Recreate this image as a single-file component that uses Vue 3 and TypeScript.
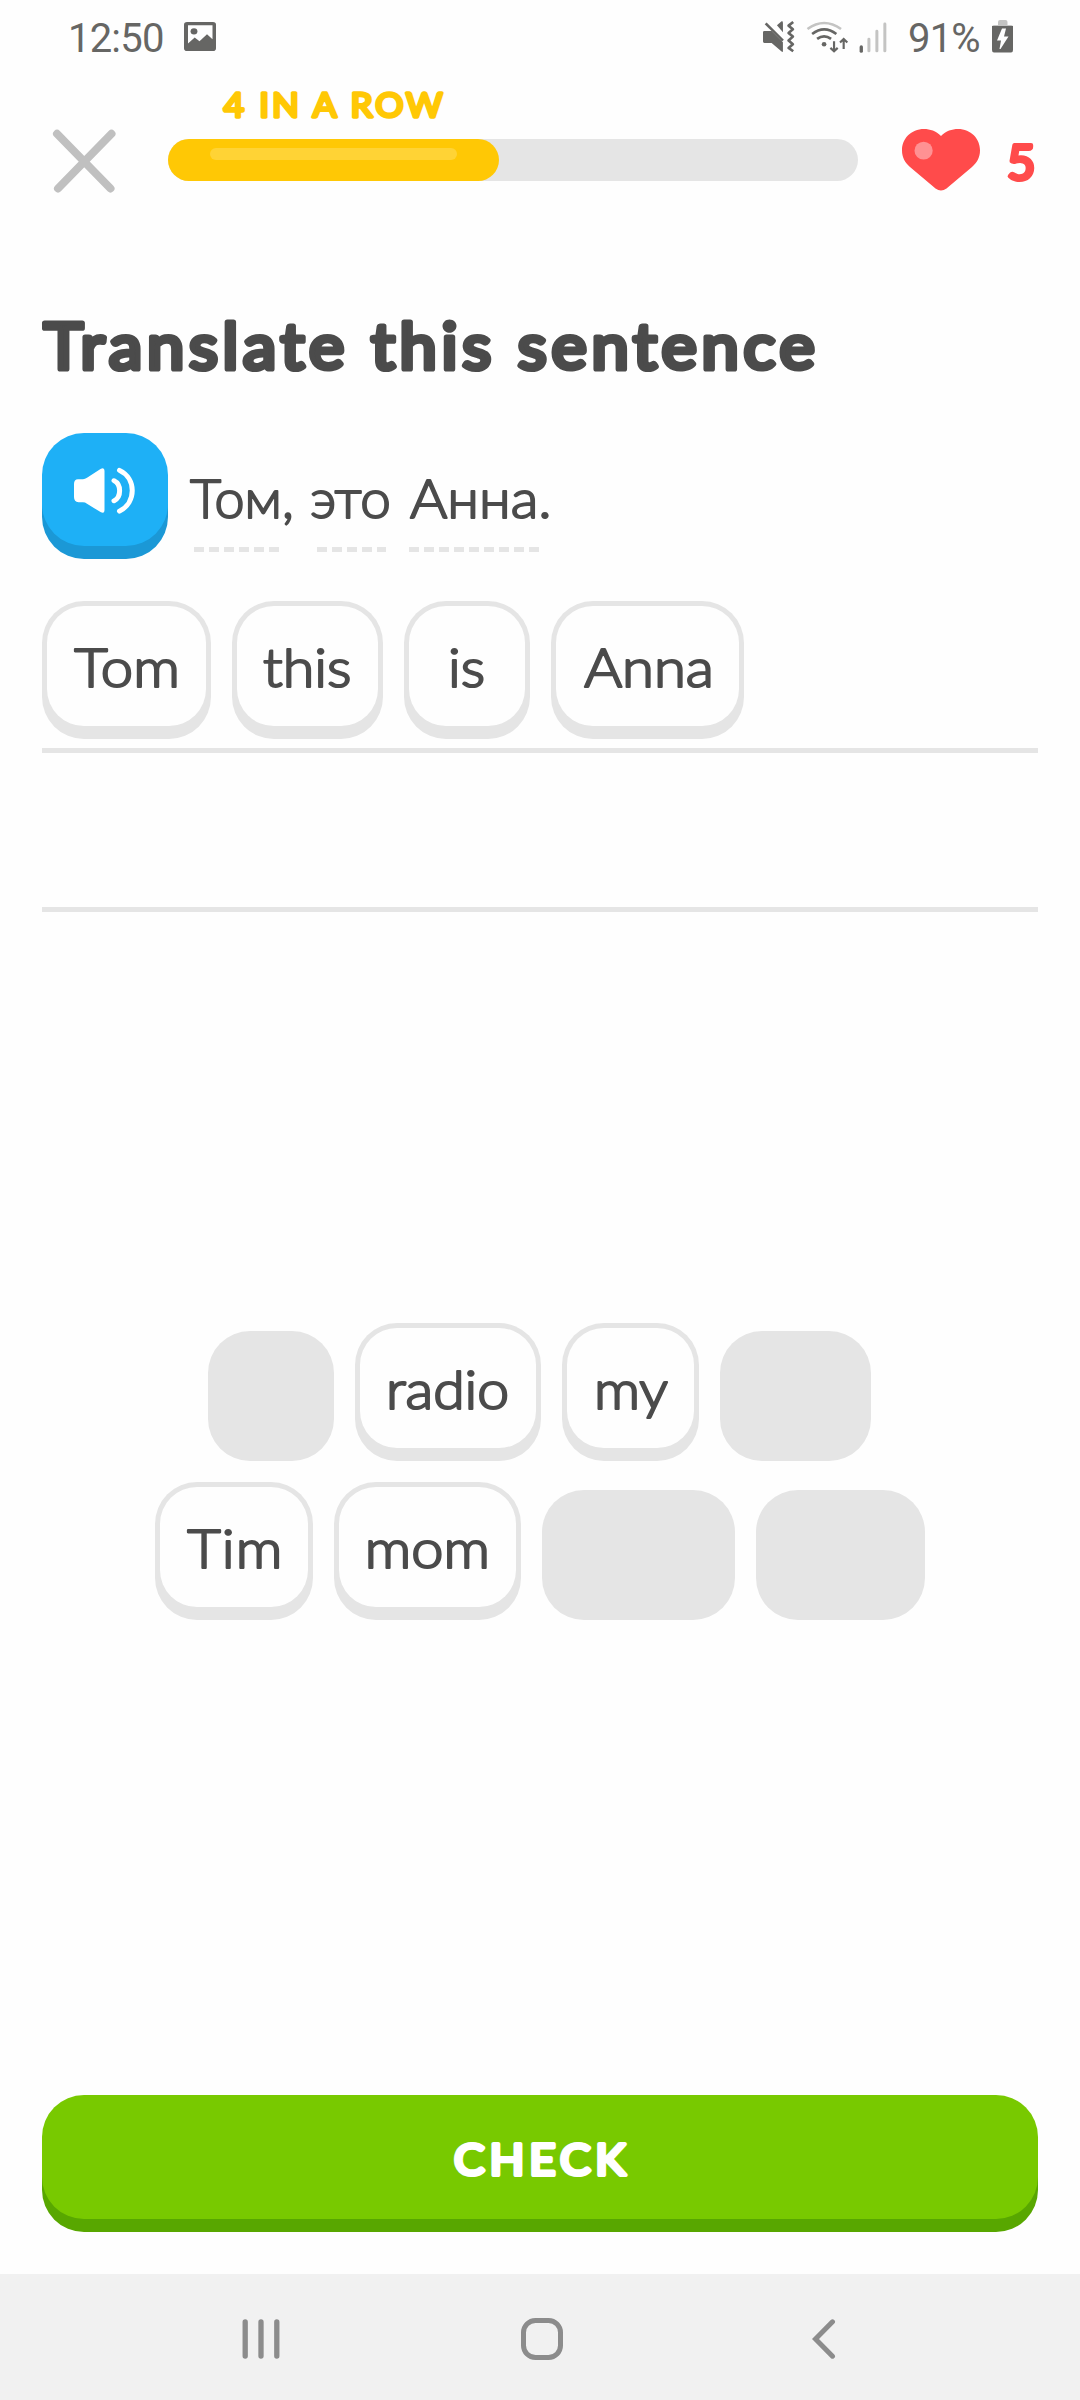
<script setup lang="ts">
import { h, type FunctionalComponent } from 'vue'

interface LabelProps {
  text: string
  ink: number
  cap: number
  stroke: number
  weight?: number
  widen?: number
}

interface Word {
  text: string
  width: number
  inset?: number
  ink?: number
  used?: boolean
}

const context = document.createElement('canvas').getContext('2d')!
const CAP_RATIO = 0.72

// A text line with rounded stroke ends, widened and tracked so that its glyphs fill `ink` pixels.
const RoundLabel: FunctionalComponent<LabelProps> = (props) => {
  const size = (props.cap - props.stroke) / CAP_RATIO
  const weight = props.weight ?? 400
  context.font = `${weight} ${size}px Lato, "Open Sans", sans-serif`
  const m = context.measureText(props.text)
  const glyphs = m.actualBoundingBoxLeft + m.actualBoundingBoxRight
  const gaps = props.text.length - 1
  const stretch = gaps > 0 ? Math.min(props.widen ?? 1.09, Math.max(0.96, props.ink / (glyphs + props.stroke))) : 1
  const spacing = gaps > 0 ? (props.ink / stretch - props.stroke - glyphs) / gaps : 0
  return h('svg', { width: props.ink, height: props.cap, style: { overflow: 'visible', display: 'block', flex: 'none' } }, [
    h('text', {
      x: m.actualBoundingBoxLeft + props.stroke / 2,
      y: props.cap - props.stroke / 2,
      transform: `scale(${stretch} 1)`,
      fill: 'currentColor',
      stroke: 'currentColor',
      'stroke-width': props.stroke,
      'stroke-linejoin': 'round',
      style: {
        fontFamily: 'Lato, "Open Sans", sans-serif',
        fontSize: `${size}px`,
        fontWeight: weight,
        letterSpacing: `${spacing}px`,
        whiteSpace: 'pre',
      },
    }, props.text),
  ])
}
RoundLabel.props = ['text', 'ink', 'cap', 'stroke', 'weight', 'widen']

const prompt = [
  { text: 'Том,', ink: 103, dash: 85, lead: 5 },
  { text: 'это', ink: 79, dash: 69, lead: 6 },
  { text: 'Анна.', ink: 140, dash: 130, lead: 0 },
]

const answer: Word[] = [
  { text: 'Tom', width: 169, inset: 30.5, ink: 104 },
  { text: 'this', width: 151, inset: 31, ink: 88 },
  { text: 'is', width: 126, inset: 46, ink: 34.5 },
  { text: 'Anna', width: 193, inset: 31.5, ink: 128 },
]

const bank: Word[][] = [
  [
    { text: 'is', width: 126, used: true },
    { text: 'radio', width: 186, inset: 34, ink: 118.5 },
    { text: 'my', width: 137, inset: 34.5, ink: 71.5 },
    { text: 'this', width: 151, used: true },
  ],
  [
    { text: 'Tim', width: 158, inset: 30.5, ink: 93.5 },
    { text: 'mom', width: 187, inset: 34, ink: 119 },
    { text: 'Anna', width: 193, used: true },
    { text: 'Tom', width: 169, used: true },
  ],
]

const progress = 48
</script>

<template>
  <main class="screen">
    <div class="status">
      <span class="status-text">12:50</span>
      <svg class="picture" width="32" height="29" viewBox="0 0 32 31" preserveAspectRatio="none">
        <path fill="#666664" fill-rule="evenodd" d="M3 0H29Q32 0 32 3V28Q32 31 29 31H3Q0 31 0 28V3Q0 0 3 0ZM4 3.5V23L10.700 16.500L15.500 20.500L23 13L28.500 18.500V3.500Z" />
        <circle cx="10" cy="10" r="3.400" fill="#666664" />
      </svg>
      <svg class="signals" width="124" height="34" viewBox="66 59 373.500 102.400" fill="none">
        <g fill="#666664">
          <path d="M70 92H92L126 126V153Q126 157 122 154L92 128H70Q66 128 66 124V96Q66 92 70 92Z" />
          <path d="M108 75L122 63Q126 62 126 67V96Z" />
        </g>
        <path d="M74 69L126 121" stroke="#666664" stroke-width="8" />
        <path d="M157 65L143 76L156 87L143 98L156 109L143 121L156 132L143 143L157 153" stroke="#666664" stroke-width="8" stroke-linejoin="round" />
        <path d="M200 86Q250 50 301 86" stroke="#c4c4c3" stroke-width="8" />
        <path d="M214 101Q250 73 287 101M229 116Q250 100 271 116" stroke="#666664" stroke-width="8" />
        <circle cx="250" cy="132" r="7" fill="#666664" />
        <path d="M280 123V152M269 143L280 153L291 143M309 146V117M298 127L309 116L320 127" stroke="#666664" stroke-width="6.500" />
        <path d="M362 140V153" stroke="#666664" stroke-width="10" stroke-linecap="round" />
        <path d="M385 117V152M409 93V152M433 71V152" stroke="#c4c4c3" stroke-width="9" stroke-linecap="round" />
      </svg>
      <span class="status-text battery-text">91%</span>
      <svg class="battery" width="21" height="33" viewBox="0 0 21 33">
        <path d="M6 5V2Q6 0 8 0H13.500Q15.500 0 15.500 2V5H19Q21 5 21 7V9H0V7Q0 5 2 5Z" fill="#c4c4c3" />
        <path d="M0 6H21V30Q21 32.500 19 32.500H2Q0 32.500 0 30Z" fill="#666664" />
        <path d="M10 8.500H14L12 16.500H16.500L8.500 29H7.500L9 20.500H5Z" fill="#fefefe" />
      </svg>
    </div>

    <header class="lesson">
      <svg class="close" width="64" height="64" viewBox="0 0 64 64">
        <path d="M5 4.800L58.500 59.500M59.500 4.800L6 59.500" stroke="#c0c0c0" stroke-width="8" stroke-linecap="round" />
      </svg>
      <div class="progress">
        <div class="streak"><RoundLabel text="4 IN A ROW" :ink="225" :cap="27.5" :stroke="3.3" :widen="1.05" /></div>
        <div class="track">
          <div class="fill" :style="{ width: progress + '%' }"><div class="shine" /></div>
        </div>
      </div>
      <svg class="heart" width="78" height="62" viewBox="0 0 78 63" preserveAspectRatio="none">
        <path d="M39 7C34 2 28 0 22 0C9 0 0 10 0 21.500C0 29 3 34 8 38.500L33.500 60.500Q39 64.500 44.500 60.500L70 38.500C75 34 78 29 78 21.500C78 10 69 0 56 0C50 0 44 2 39 7Z" fill="#ff4b4b" />
        <circle cx="21.600" cy="22" r="9.100" fill="#ff9193" />
      </svg>
      <div class="lives"><RoundLabel text="5" :ink="28" :cap="39.5" :stroke="4.2" /></div>
    </header>

    <h1 class="title"><RoundLabel text="Translate this sentence" :ink="774" :cap="50.5" :stroke="5.2" :widen="1.06" /></h1>

    <section class="prompt">
      <button class="speaker" aria-label="Play">
        <svg width="61" height="47" viewBox="0 0 61 50" preserveAspectRatio="none" fill="none">
          <path d="M4 13H9Q11 13 13 11.500L26.500 2Q30.500 0 30.500 4V46Q30.500 50 26.500 48L13 39Q11 37.500 9 37.500H4.500Q0 37 0 32V18Q0 13 4 13Z" fill="#fff" />
          <path d="M40 14.500C47.500 18.500 47.500 32 40 36M45.500 3.500C62.500 12 62.500 38 45.500 47" stroke="#fff" stroke-width="5" stroke-linecap="round" />
        </svg>
      </button>
      <div class="sentence">
        <div v-for="part in prompt" :key="part.text" class="part">
          <RoundLabel :text="part.text" :ink="part.ink" :cap="40.500" :stroke="2" :weight="300" />
          <div class="dashes" :style="{ width: part.dash + 'px', marginLeft: part.lead + 'px' }" />
        </div>
      </div>
    </section>

    <section class="answer">
      <div class="line first">
        <div v-for="word in answer" :key="word.text" class="tile" :style="{ width: word.width + 'px', paddingLeft: word.inset + 'px' }">
          <RoundLabel :text="word.text" :ink="word.ink!" :cap="40.500" :stroke="2.200" :weight="300" />
        </div>
      </div>
      <div class="line" />
    </section>

    <section class="bank">
      <div v-for="(row, i) in bank" :key="i" class="row">
        <template v-for="word in row" :key="word.text">
          <div v-if="word.used" class="hole" :style="{ width: word.width + 'px' }" />
          <div v-else class="tile" :style="{ width: word.width + 'px', paddingLeft: word.inset + 'px' }">
            <RoundLabel :text="word.text" :ink="word.ink!" :cap="40.500" :stroke="2.200" :weight="300" />
          </div>
        </template>
      </div>
    </section>

    <button class="check"><RoundLabel text="CHECK" :ink="174" :cap="35.500" :stroke="4.200" :widen="1.05" /></button>

    <nav class="nav">
      <svg width="38" height="42" viewBox="0 0 38 42"><path d="M3.200 4V38M19 4V38M34.800 4V38" stroke="#8c8c8c" stroke-width="5.300" stroke-linecap="round" /></svg>
      <svg width="42" height="42" viewBox="0 0 42 42"><rect x="2.500" y="2.500" width="37" height="37" rx="12" fill="none" stroke="#8c8c8c" stroke-width="5" /></svg>
      <svg width="24" height="42" viewBox="0 0 24 42"><path d="M20.500 3.800L3.500 21L20.500 38.200" fill="none" stroke="#8c8c8c" stroke-width="5" stroke-linecap="round" /></svg>
    </nav>
  </main>
</template>

<style>
body {
  background: #fefefe;
}
</style>

<style scoped>
.screen {
  box-sizing: border-box;
  width: 1080px;
  height: 2400px;
  display: flex;
  flex-direction: column;
  overflow: hidden;
  background: #fefefe;
  color: #4b4b4b;
  font-family: Lato, "Open Sans", sans-serif;
}
.screen * {
  box-sizing: border-box;
}
.status {
  height: 80px;
  flex: none;
  display: flex;
  align-items: flex-start;
  padding: 15px 67px 0 68px;
  color: #666664;
}
.status-text {
  font: 400 40px/47px Roboto, sans-serif;
  letter-spacing: -0.8px;
}
.picture {
  margin: 7px 0 0 20px;
}
.signals {
  margin: 5px 0 0 auto;
}
.battery-text {
  margin-left: 21px;
  width: 84px;
}
.battery {
  margin-top: 5px;
  flex: none;
}
.lesson {
  height: 241px;
  flex: none;
  display: flex;
  align-items: flex-start;
  padding-left: 52px;
}
.close {
  margin-top: 49px;
  flex: none;
}
.progress {
  width: 690px;
  margin-left: 52px;
  padding-top: 11px;
}
.streak {
  padding-left: 54px;
  height: 48px;
  color: #ffc805;
}
.track {
  height: 42px;
  border-radius: 21px;
  background: #e5e5e5;
}
.fill {
  height: 42px;
  border-radius: 21px;
  background: #ffc805;
  padding: 9px 42px;
}
.shine {
  height: 12px;
  border-radius: 6px;
  background: #ffd335;
}
.heart {
  margin: 49px 0 0 44px;
  flex: none;
}
.lives {
  margin: 63px 0 0 27px;
  color: #ff4b4b;
}
.title {
  margin: 0;
  padding-left: 41px;
  height: 112px;
  flex: none;
}
button {
  border: 0;
  padding: 0;
  font: inherit;
}
.prompt {
  display: flex;
  align-items: flex-start;
  height: 168px;
  flex: none;
  padding-left: 42px;
}
.speaker {
  width: 126px;
  height: 113px;
  border-radius: 42px;
  background: #1eb0f6;
  box-shadow: 0 13px 0 #1b98d6;
  display: flex;
  padding: 34px 0 0 32px;
}
.sentence {
  display: flex;
  padding: 45px 0 0 21px;
  gap: 19px;
}
.part {
  display: flex;
  flex-direction: column;
}
.dashes {
  height: 5px;
  margin-top: 28.5px;
  background: repeating-linear-gradient(90deg, #e5e5e5 0 10px, transparent 10px 15px);
}
.answer {
  flex: none;
  padding: 0 42px;
}
.line {
  height: 159px;
  border-bottom: 5px solid #e5e5e5;
}
.line.first {
  height: 152px;
  display: flex;
  gap: 21px;
}
.tile {
  position: relative;
  z-index: 0;
  height: 138px;
  flex: none;
  padding-top: 47px;
  border-radius: 42px;
  background: #e5e5e5;
}
.tile::before {
  content: "";
  position: absolute;
  inset: 5px 5px 13px;
  border-radius: 37px;
  background: #fefefe;
  z-index: -1;
}
.bank {
  flex: none;
  margin-top: 411px;
  display: flex;
  flex-direction: column;
  gap: 21px;
}
.row {
  display: flex;
  justify-content: center;
  align-items: flex-end;
  gap: 21px;
}
.row:first-child {
  padding-right: 1px;
}
.hole {
  height: 130px;
  border-radius: 42px;
  background: #e5e5e5;
}
.check {
  flex: none;
  margin: 475px 42px 0;
  height: 124px;
  border-radius: 42px;
  background: #78c900;
  box-shadow: 0 13px 0 #58a700;
  color: #fff;
  display: flex;
  justify-content: center;
  padding: 47px 0 0 2px;
}
.nav {
  margin-top: 55px;
  height: 126px;
  flex: none;
  background: #f1f1f1;
  display: flex;
  align-items: center;
  padding: 4px 0 0 242px;
}
.nav svg + svg {
  margin-left: 241px;
}
.nav svg + svg + svg {
  margin-left: 249px;
}
</style>
